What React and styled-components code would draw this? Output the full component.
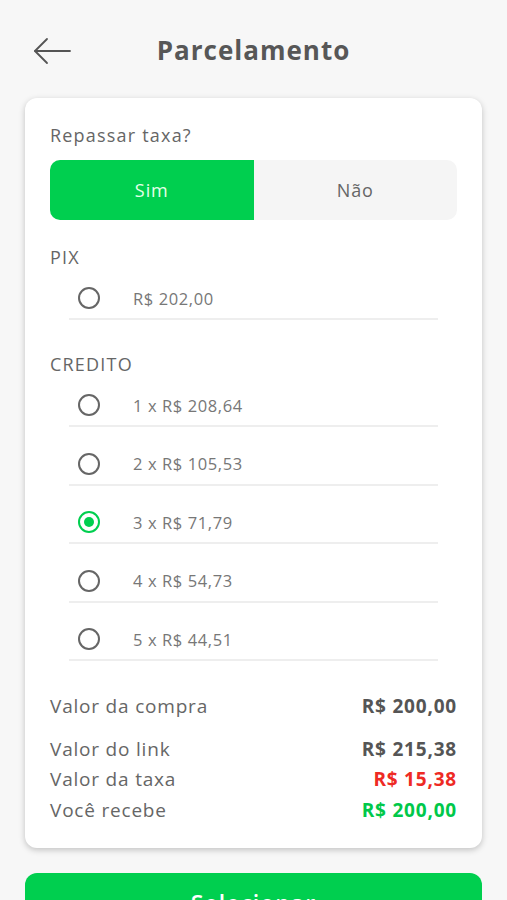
import styled, { createGlobalStyle } from "styled-components";

const GlobalStyle = createGlobalStyle`
  html, body {
    margin: 0;
    padding: 0;
    background: #f7f7f7;
    font-family: "Open Sans", "Liberation Sans", sans-serif;
  }
`;

const Page = styled.div`
  width: 507px;
  height: 900px;
  overflow: hidden;
  box-sizing: border-box;
  padding: 0 24px;
  background: #f7f7f7;
`;

const Header = styled.div`
  position: relative;
  height: 98px;
  display: flex;
  align-items: center;
  justify-content: center;
`;

const Back = styled.button`
  position: absolute;
  left: 8px;
  top: 36px;
  background: none;
  border: none;
  padding: 0;
  display: flex;
`;

const Title = styled.h1`
  margin: 0 0 -2px;
  font-size: 26px;
  font-weight: 700;
  color: #575757;
  letter-spacing: 1px;
`;

const Card = styled.div`
  background: #fff;
  border-radius: 12px;
  box-shadow: 0 2px 6px rgba(0, 0, 0, 0.22);
  padding: 24px 25px 23px;
  margin: 0 1px;
`;

const Label = styled.div`
  font-size: 18px;
  color: #666;
  line-height: 26px;
  letter-spacing: 1.2px;
`;

const Toggle = styled.div`
  display: flex;
  height: 60px;
  margin-top: 12px;
  border-radius: 10px;
  background: #f5f5f5;
  overflow: hidden;
`;

const ToggleOption = styled.div`
  flex: 1;
  display: flex;
  align-items: center;
  justify-content: center;
  font-size: 18px;
  letter-spacing: 0.9px;
  background: ${(p) => (p.$active ? "#00cf4f" : "transparent")};
  color: ${(p) => (p.$active ? "#e6ffe9" : "#666")};
`;

const Section = styled.div`
  margin-top: ${(p) => p.$top}px;
`;

const Options = styled.div`
  padding: 8px 19px 0;
`;

const Row = styled.div`
  display: flex;
  align-items: center;
  height: 40px;
  border-bottom: 2px solid #eeeeee;
  margin-bottom: 16.5px;
  padding-left: 9px;
  &:last-child {
    margin-bottom: 0;
  }
`;

const Radio = styled.span`
  width: 18px;
  height: 18px;
  border-radius: 50%;
  border: 2px solid ${(p) => (p.$checked ? "#00cf4f" : "#666")};
  display: flex;
  align-items: center;
  justify-content: center;
  margin-right: 33px;
  &::after {
    content: "";
    width: 10px;
    height: 10px;
    border-radius: 50%;
    background: ${(p) => (p.$checked ? "#00cf4f" : "transparent")};
  }
`;

const OptionText = styled.span`
  font-size: 16.5px;
  color: #777;
  letter-spacing: 0.6px;
`;

const Summary = styled.div`
  margin-top: 30px;
`;

const SumRow = styled.div`
  display: flex;
  justify-content: space-between;
  align-items: center;
  font-size: 19px;
  letter-spacing: 0.8px;
  line-height: 30.5px;
  margin-top: ${(p) => p.$gap || 0}px;
`;

const SumLabel = styled.span`
  color: #666;
`;

const SumValue = styled.span`
  font-weight: 700;
  color: ${(p) => p.$color || "#555"};
`;

const Button = styled.button`
  margin: 25px 1px 0;
  width: calc(100% - 2px);
  height: 60px;
  border: none;
  border-radius: 12px;
  background: #00cf4f;
  color: #fff;
  font-family: inherit;
  font-size: 23px;
  font-weight: 600;
  letter-spacing: 1px;
  padding-top: 14px;
  display: flex;
  justify-content: center;
`;

const pix = ["R$ 202,00"];
const credito = [
  "1 x R$ 208,64",
  "2 x R$ 105,53",
  "3 x R$ 71,79",
  "4 x R$ 54,73",
  "5 x R$ 44,51",
];

export default function App() {
  return (
    <Page>
      <GlobalStyle />
      <Header>
        <Back aria-label="Voltar">
          <svg width="40" height="30" viewBox="0 0 40 30" fill="none" stroke="#555" strokeWidth="1.8" strokeLinecap="round" strokeLinejoin="round">
            <path d="M38 15H3" />
            <path d="M15 3L3 15l12 12" />
          </svg>
        </Back>
        <Title>Parcelamento</Title>
      </Header>
      <Card>
        <Label>Repassar taxa?</Label>
        <Toggle>
          <ToggleOption $active>Sim</ToggleOption>
          <ToggleOption>Não</ToggleOption>
        </Toggle>
        <Section $top={24}>
          <Label>PIX</Label>
          <Options>
            {pix.map((t) => (
              <Row key={t}>
                <Radio />
                <OptionText>{t}</OptionText>
              </Row>
            ))}
          </Options>
        </Section>
        <Section $top={31}>
          <Label>CREDITO</Label>
          <Options>
            {credito.map((t, i) => (
              <Row key={t}>
                <Radio $checked={i === 2} />
                <OptionText>{t}</OptionText>
              </Row>
            ))}
          </Options>
        </Section>
        <Summary>
          <SumRow>
            <SumLabel>Valor da compra</SumLabel>
            <SumValue>R$ 200,00</SumValue>
          </SumRow>
          <SumRow $gap={12}>
            <SumLabel>Valor do link</SumLabel>
            <SumValue>R$ 215,38</SumValue>
          </SumRow>
          <SumRow>
            <SumLabel>Valor da taxa</SumLabel>
            <SumValue $color="#ee2a24">R$ 15,38</SumValue>
          </SumRow>
          <SumRow>
            <SumLabel>Você recebe</SumLabel>
            <SumValue $color="#00c84a">R$ 200,00</SumValue>
          </SumRow>
        </Summary>
      </Card>
      <Button>Selecionar</Button>
    </Page>
  );
}
